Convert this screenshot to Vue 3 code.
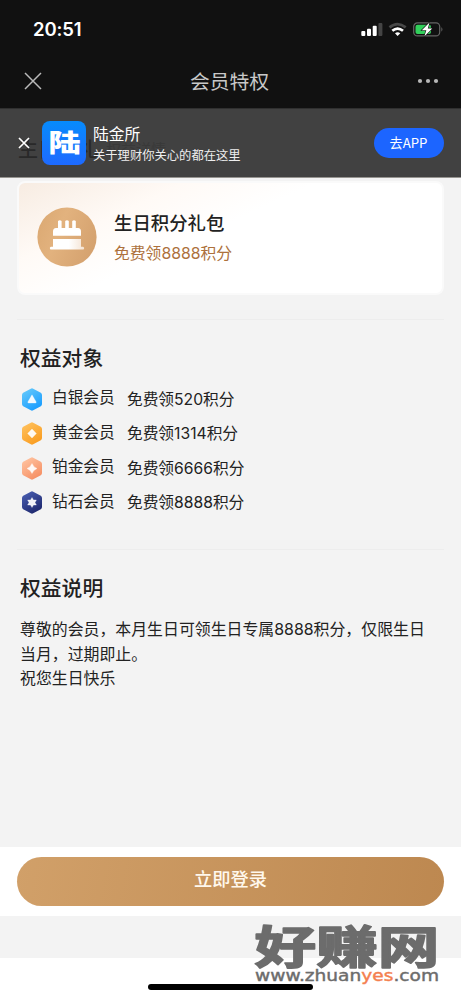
<script setup>
const levels = [
  { name: '白银会员', gift: '免费领520积分', from: '#63c8fb', to: '#149aff', shape: 'M11 6.8 L15.2 14 Q15.4 15 14.3 15 H7.7 Q6.6 15 6.8 14 Z' },
  { name: '黄金会员', gift: '免费领1314积分', from: '#ffc15d', to: '#f99a1c', shape: 'M11 7 L15.4 11.5 L11 16 L6.6 11.5 Z' },
  { name: '铂金会员', gift: '免费领6666积分', from: '#ffc3a0', to: '#f58c60', shape: 'M11 6.4 Q12.4 10.1 16 11.5 Q12.4 12.9 11 16.6 Q9.6 12.9 6 11.5 Q9.6 10.1 11 6.4 Z' },
  { name: '钻石会员', gift: '免费领8888积分', from: '#485db0', to: '#1b2469', shape: 'M11 6.5 L12.5 8.9 L15.4 9 L14 11.5 L15.4 14 L12.5 14.1 L11 16.5 L9.5 14.1 L6.6 14 L8 11.5 L6.6 9 L9.5 8.9 Z' },
]
</script>

<template>
  <div class="page">
    <header class="top">
      <div class="status">
        <span class="time">20:51</span>
        <svg class="indicators" width="84" height="18" viewBox="0 0 84 18">
          <g fill="#fff">
            <rect x="1.3" y="10" width="4" height="5" rx="1" />
            <rect x="7" y="7.8" width="4" height="7.2" rx="1" />
            <rect x="12.7" y="4.8" width="4" height="10.2" rx="1" />
          </g>
          <rect x="18.4" y="2" width="4" height="13" rx="1" fill="#444" />
          <g fill="none" stroke-width="2.7">
            <path d="M29.5 6.4 Q37.5 -.3 45.7 6.4" stroke="#484848" />
            <path d="M32.3 9.8 Q37.6 5.3 43 9.8" stroke="#fff" />
          </g>
          <path d="M35 12.2 Q37.6 10.2 40.3 12.2 L37.6 15 Z" fill="#fff" />
          <rect x="53.7" y="1.9" width="26" height="13" rx="3.7" fill="none" stroke="#656565" stroke-width="1.2" />
          <path d="M81.4 6 Q83.5 8.4 81.4 10.8 Z" fill="#656565" />
          <rect x="55.5" y="3.7" width="15.5" height="9.4" rx="2" fill="#32cf5b" />
          <path d="M69.5 1.5 L61.8 9.2 H66.3 L64.3 15.5 L72.2 7.4 H67.8 Z" fill="#fff" stroke="#111" stroke-width="1.2" paint-order="stroke" />
        </svg>
      </div>
      <div class="nav">
        <svg class="close" width="18" height="18" viewBox="0 0 18 18"><path d="M1 1 L17 17 M17 1 L1 17" stroke="#bababa" stroke-width="1.5" /></svg>
        <h1>会员特权</h1>
        <svg class="more" width="22" height="6" viewBox="0 0 22 6" fill="#b8b8b8"><circle cx="3" cy="3" r="2.1" /><circle cx="11" cy="3" r="2.1" /><circle cx="19" cy="3" r="2.1" /></svg>
      </div>
    </header>

    <section class="banner">
      <div class="under"><b>生日好礼</b><span>权益详情</span></div>
      <svg class="dismiss" width="12" height="12" viewBox="0 0 12 12"><path d="M1 1 L11 11 M11 1 L1 11" stroke="#fff" stroke-width="1.7" /></svg>
      <div class="logo">
        <svg width="44" height="44" viewBox="0 0 44 44"><text x="6.5" y="31" textLength="32" lengthAdjust="spacingAndGlyphs">陆</text></svg>
      </div>
      <div class="brand"><strong>陆金所</strong><span>关于理财你关心的都在这里</span></div>
      <button class="app-button">去APP</button>
    </section>

    <main>
      <section class="gift">
        <svg class="cake" width="60" height="60" viewBox="0 0 60 60">
          <defs>
            <linearGradient id="cake-bg" x1="0" x2="1" y1=".3" y2=".7"><stop stop-color="#dcaa74" /><stop offset=".35" stop-color="#e2b27e" /><stop offset="1" stop-color="#d4a16e" /></linearGradient>
            <linearGradient id="cake-base" x1="0" x2="1"><stop stop-color="#fff" /><stop offset=".55" stop-color="#fff" /><stop offset="1" stop-color="#f4e3d3" /></linearGradient>
          </defs>
          <circle cx="30" cy="30" r="29.6" fill="url(#cake-bg)" />
          <path fill="#fff" d="M21 14 q1.8 -1.7 3.6 0 V21 H28.2 V14 q1.8 -1.7 3.6 0 V21 H35.2 V14 q1.8 -1.7 3.6 0 V21 H41 Q44 21.3 44 24.4 V28.8 H16 V24.4 Q16 21.3 19 21 H21 Z" />
          <path fill="url(#cake-base)" d="M16 32 H44 V39.7 H46 Q48 40.5 46.5 42.5 H13.5 Q12 40.5 14 39.7 H16 Z" />
        </svg>
        <div class="gift-text"><h2>生日积分礼包</h2><p>免费领8888积分</p></div>
      </section>

      <section class="block members">
        <h3>权益对象</h3>
        <ul>
          <li v-for="(level, i) in levels" :key="level.name">
            <svg class="badge" width="22" height="23" viewBox="0 0 22 23">
              <defs><linearGradient :id="'level' + i" x1=".2" y1="0" x2=".8" y2="1"><stop :stop-color="level.from" /><stop offset="1" :stop-color="level.to" /></linearGradient></defs>
              <path :fill="`url(#level${i})`" d="M9.8 .7 Q11 0 12.2 .7 L19.8 4.8 Q21 5.6 21 7 V16 Q21 17.4 19.8 18.2 L12.2 22.3 Q11 23 9.8 22.3 L2.2 18.2 Q1 17.4 1 16 V7 Q1 5.6 2.2 4.8 Z" />
              <path :d="level.shape" fill="#fff" fill-opacity=".93" stroke="#fff" stroke-opacity=".5" stroke-width=".6" stroke-linejoin="round" />
            </svg>
            <span class="level-name">{{ level.name }}</span>
            <span class="level-gift">{{ level.gift }}</span>
          </li>
        </ul>
      </section>

      <section class="block notes">
        <h3>权益说明</h3>
        <p>尊敬的会员，本月生日可领生日专属8888积分，仅限生日<br>当月，过期即止。<br>祝您生日快乐</p>
      </section>
    </main>

    <div class="action"><button>立即登录</button></div>
    <footer><i class="home-bar"></i></footer>

    <svg class="mark" width="190" height="72" viewBox="0 0 190 72">
      <text class="mark-name" x="2.5" y="45.5" textLength="185" lengthAdjust="spacingAndGlyphs">好赚网</text>
      <text class="mark-url" x="3" y="62.5" textLength="184" lengthAdjust="spacingAndGlyphs">www.zhuan<tspan fill="#f4804f" stroke="#f4804f">yes</tspan>.com</text>
    </svg>
  </div>
</template>

<style>
body { margin: 0; }
</style>

<style scoped>
* { box-sizing: border-box; }
h1, h2, h3, p, ul { margin: 0; padding: 0; }
svg { display: block; flex: none; }
button { border: 0; padding: 0; font-family: inherit; }
.page { position: relative; display: flex; flex-direction: column; width: 461px; height: 1000px; overflow: hidden; background: #f3f3f3; color: #222; font-family: Inter, "Noto Sans CJK SC", sans-serif; }
.top { height: 108px; background: #111; }
.status { display: flex; align-items: center; justify-content: space-between; height: 56px; padding: 0 17px 0 33px; }
.time { margin-top: 1px; color: #fff; font-size: 18.5px; font-weight: 600; letter-spacing: -.1px; }
.indicators { margin-top: 3px; }
.nav { display: flex; align-items: center; justify-content: space-between; height: 52px; padding: 0 22px 2px 24px; }
h1 { margin-top: 1px; color: #c8c8c8; font-size: 19.8px; line-height: 28px; font-weight: 400; }
.banner { position: relative; display: flex; align-items: center; height: 70px; padding: 0 17px 0 18px; background: #414141; border-top: 1px solid #303030; border-bottom: 1px solid #969490; }
.under { position: absolute; left: 18px; top: 26px; display: flex; align-items: center; gap: 8px; line-height: 30px; color: #292929; font-size: 20px; }
.under b { font-weight: 500; }
.under span { color: #393939; font-size: 15px; }
.dismiss { position: relative; }
.logo { position: relative; width: 44px; height: 44px; margin-left: 12px; border-radius: 8px; background: linear-gradient(#078bfc, #1e6aff); overflow: hidden; }
.logo text { fill: #fff; font-size: 25px; font-weight: 900; }
.brand { position: relative; display: flex; flex-direction: column; margin: 3px auto 0 7px; color: #fff; }
.brand strong { font-size: 15.8px; line-height: 22px; font-weight: 400; }
.brand span { font-size: 12.3px; line-height: 20px; color: #eee; }
.app-button { width: 70px; height: 30px; padding-right: 1px; border-radius: 15px; background: #1c65ff; color: #fff; font: 13.2px/30px "Noto Sans CJK SC", sans-serif; }
main { height: 669px; padding: 3px 17px 0; }
.gift { display: flex; align-items: center; height: 114px; padding: 0 20px 2px; border: 2px solid #fafafa; border-radius: 8px; background: linear-gradient(155deg, #f7ece2 0%, #fffaf6 25%, #fff 45%); }
.cake { margin-left: -2px; }
.gift-text { margin: 2px 0 0 17px; }
h2 { font-size: 18.4px; line-height: 28px; font-weight: 500; }
.gift-text p { margin-top: 3px; color: #ad713c; font-size: 15.8px; line-height: 28px; }
.block { padding-left: 3px; border-top: 1px solid #ededed; }
.members { margin-top: 24px; height: 230px; padding-top: 23px; }
h3 { font-size: 20.8px; line-height: 32px; font-weight: 500; }
ul { list-style: none; margin-top: 7px; }
li { display: flex; align-items: center; height: 34.5px; font-size: 15.7px; line-height: 24px; }
.badge { margin: 0 9px 0 1px; }
.level-name { width: 75px; margin-top: -2px; }
.level-gift { margin-top: 1px; }
.notes { padding-top: 23px; }
.notes p { margin-top: 13px; font-size: 15.9px; line-height: 24.7px; white-space: nowrap; }
.action { height: 69px; padding: 10px 17px; background: #fff; }
.action button { display: block; width: 427px; height: 49px; padding-bottom: 4px; border-radius: 25px; background: linear-gradient(100deg, #d1a069, #bd8850); color: #fff8ed; font-size: 18.3px; line-height: 45px; font-weight: 500; }
footer { display: flex; justify-content: center; height: 42px; margin-top: 42px; padding-top: 26px; background: #fff; }
.home-bar { width: 165px; height: 6px; border-radius: 3px; background: #000; }
.mark { position: absolute; left: 252px; top: 918px; }
.mark-name { fill: #6c6c6c; stroke: #6c6c6c; stroke-width: 1.6; stroke-linejoin: round; font-size: 45px; font-weight: 700; }
.mark-url { fill: #6c6c6c; stroke: #6c6c6c; stroke-width: .4; font-family: "DejaVu Sans", sans-serif; font-size: 15px; }
</style>
